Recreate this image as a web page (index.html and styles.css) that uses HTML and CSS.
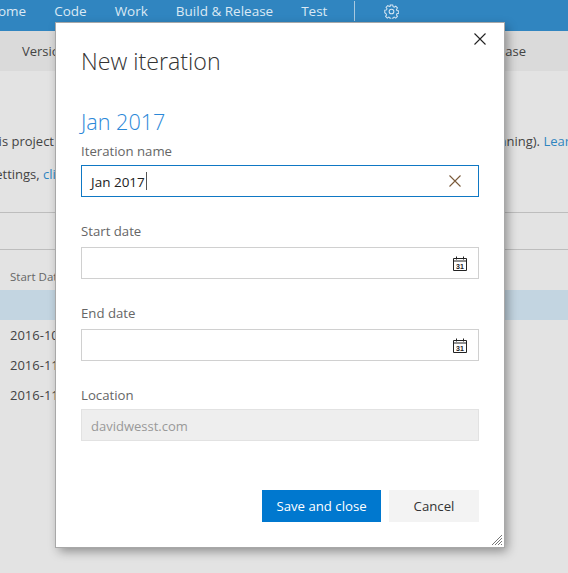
FILE: index.html
```html
<!DOCTYPE html>
<html lang="en">

<head>
    <meta charset="UTF-8" />
    <title>New iteration</title>
    <link rel="stylesheet" href="styles.css">
</head>

<body>
    <nav class="topbar">
        <a>Home</a>
        <a>Code</a>
        <a>Work</a>
        <a>Build &amp; Release</a>
        <a>Test</a>
        <span class="topbar-sep"></span>
        <svg class="gear" width="15" height="15" viewBox="0 0 16 16" fill="none" stroke="#d5e6f3" stroke-width="1.100">
            <circle cx="8" cy="8" r="2.500" />
            <path d="M6.700 1h2.600l.4 1.900 1.200.5 1.600-1 1.800 1.800-1 1.600.5 1.200 1.900.4v2.600l-1.900.4-.5 1.200 1 1.600-1.800 1.800-1.600-1-1.200.5-.4 1.900H6.700l-.4-1.900-1.200-.5-1.600 1-1.800-1.800 1-1.600-.5-1.200L.8 9.300V6.700l1.900-.4.5-1.200-1-1.600 1.800-1.800 1.600 1 1.200-.5z" />
        </svg>
    </nav>
    <div class="tabs">
        <a>Versions</a>
        <a>Release</a>
    </div>
    <main class="page">
        <p class="line-one"><span>this project</span><span>(planning). <a>Learn</a></span></p>
        <p class="line-two">settings, <a>click</a></p>
        <div class="rule rule-first"></div>
        <div class="rule rule-second"></div>
        <div class="col-head">Start Date</div>
        <div class="row row-selected"></div>
        <div class="row">2016-10-01</div>
        <div class="row">2016-11-01</div>
        <div class="row">2016-11-15</div>
    </main>

    <section class="dialog">
        <button class="close" type="button" aria-label="Close">
            <svg width="12" height="12" viewBox="0 0 12 12" stroke="#222" stroke-width="1.100">
                <path d="M.5.5l11 11M11.500.5l-11 11" />
            </svg>
        </button>
        <h1>New iteration</h1>
        <h2>Jan 2017</h2>
        <label class="label-name">Iteration name</label>
        <div class="field field-active">
            <span class="value">Jan 2017</span><span class="caret"></span>
            <svg class="clear" width="12" height="12" viewBox="0 0 12 12" stroke="#7a5a3a" stroke-width="1.100">
                <path d="M.5.5l11 11M11.500.5l-11 11" />
            </svg>
        </div>
        <label class="label-date">Start date</label>
        <div class="field">
            <svg class="cal" width="14" height="15" viewBox="0 0 14 15" fill="none" stroke="#222">
                <path d="M.5 2.500h13v12H.5zM.5 5h13M3.500.5v3M10.500.5v3" />
                <text x="7" y="12.500" text-anchor="middle" class="cal-num">31</text>
            </svg>
        </div>
        <label class="label-date">End date</label>
        <div class="field">
            <svg class="cal" width="14" height="15" viewBox="0 0 14 15" fill="none" stroke="#222">
                <path d="M.5 2.500h13v12H.5zM.5 5h13M3.500.5v3M10.500.5v3" />
                <text x="7" y="12.500" text-anchor="middle" class="cal-num">31</text>
            </svg>
        </div>
        <label class="label-loc">Location</label>
        <div class="field field-disabled"><span class="value">davidwesst.com</span></div>
        <div class="actions">
            <button class="btn btn-primary" type="button">Save and close</button>
            <button class="btn" type="button">Cancel</button>
        </div>
        <svg class="grip" width="10" height="10" viewBox="0 0 10 10" stroke="#777" stroke-width="1">
            <path d="M0 10L10 0M3 10l7-7M6 10l4-4M9 10l1-1" />
        </svg>
    </section>
</body>

</html>
```

FILE: styles.css
```css
body {
    margin: 0;
    height: 573px;
    overflow: hidden;
    background: #e3e3e3;
    color: #444;
    font-family: "Open Sans", "Noto Sans", sans-serif;
    font-size: 13px;
}

.topbar {
    display: flex;
    align-items: center;
    gap: 28px;
    box-sizing: border-box;
    height: 31px;
    padding-bottom: 9px;
    margin-left: -12px;
    background: #3085c0;
    color: #dbe9f4;
    font-size: 13.500px;
}

.topbar-sep {
    width: 1px;
    height: 20px;
    margin-left: -1px;
    background: #a9c9e0;
}

.gear {
    margin-left: 1px;
}

.tabs {
    display: flex;
    justify-content: space-between;
    align-items: center;
    height: 40px;
    padding: 0 42px 0 22px;
    background: #dadada;
}

.page {
    position: relative;
}

.page p {
    margin: 0;
    white-space: nowrap;
}

.page a {
    color: #2f85c0;
}

.line-one {
    display: flex;
    justify-content: space-between;
    padding-top: 61px;
    margin-left: -14px !important;
    margin-right: -10px !important;
}

.line-two {
    padding-top: 15px;
    margin-left: -11px !important;
}

.rule {
    height: 1px;
    background: #bdbdbd;
}

.rule-first {
    margin-top: 29px;
}

.rule-second {
    margin-top: 36px;
}

.col-head {
    height: 40px;
    padding: 19px 0 0 10px;
    box-sizing: border-box;
    font-size: 11.500px;
    color: #666;
}

.row {
    height: 30px;
    line-height: 30px;
    padding-left: 10px;
    white-space: nowrap;
}

.row-selected {
    background: #c3d5e1;
}

.dialog {
    position: absolute;
    left: 56px;
    top: 23px;
    box-sizing: border-box;
    width: 448px;
    height: 524px;
    padding: 0 25px;
    display: flex;
    flex-direction: column;
    background: #fff;
    outline: 1px solid #a8a8a8;
    box-shadow: 3px 4px 10px rgba(0, 0, 0, 0.4);
}

.close {
    position: absolute;
    top: 10px;
    right: 18px;
    padding: 0;
    border: 0;
    background: none;
    display: flex;
}

.dialog h1 {
    margin: 22px 0 0;
    height: 32px;
    line-height: 32px;
    font-size: 23.200px;
    font-weight: 300;
    color: #333;
}

.dialog h2 {
    margin: 31px 0 0;
    height: 28px;
    line-height: 28px;
    font-size: 21.600px;
    font-weight: 300;
    color: #2b88d8;
}

.dialog label {
    display: block;
    height: 20px;
    line-height: 20px;
    font-size: 13.200px;
    color: #666;
}

.label-name {
    margin-top: 5px;
}

.label-date {
    margin-top: 24px;
}

.label-date + .field {
    margin-top: 6px;
}

.field {
    box-sizing: border-box;
    display: flex;
    align-items: center;
    flex: none;
    height: 32px;
    padding: 0 9px;
    margin-top: 4px;
    border: 1px solid #d0d0d0;
    font-size: 13.500px;
    color: #222;
}

.value {
    padding-top: 2px;
}

.field + .label-date {
    margin-top: 24px;
}

.field-active {
    border-color: #0f78c4;
}

.caret {
    width: 1px;
    height: 18px;
    margin-left: 1px;
    background: #555;
}

.clear {
    margin-left: auto;
    margin-right: 8px;
}

.cal {
    margin-left: auto;
    margin-right: 2px;
}

.cal-num {
    font-family: "Liberation Sans", sans-serif;
    font-size: 7px;
    font-weight: 700;
    fill: #222;
    stroke: none;
}

.label-loc {
    margin-top: 24px;
}

.label-loc + .field {
    margin-top: 4px;
}

.field-disabled {
    background: #eee;
    border-color: #e2e2e2;
    color: #999;
    font-size: 13px;
}

.actions {
    display: flex;
    justify-content: flex-end;
    gap: 8px;
    margin-top: 49px;
}

.btn {
    height: 32px;
    width: 90px;
    border: 0;
    padding: 0;
    background: #f3f3f3;
    color: #333;
    font-family: inherit;
    font-size: 13.200px;
}

.btn-primary {
    width: 119px;
    background: #0078cf;
    color: #fff;
}

.grip {
    position: absolute;
    right: 2px;
    bottom: 2px;
}
```
